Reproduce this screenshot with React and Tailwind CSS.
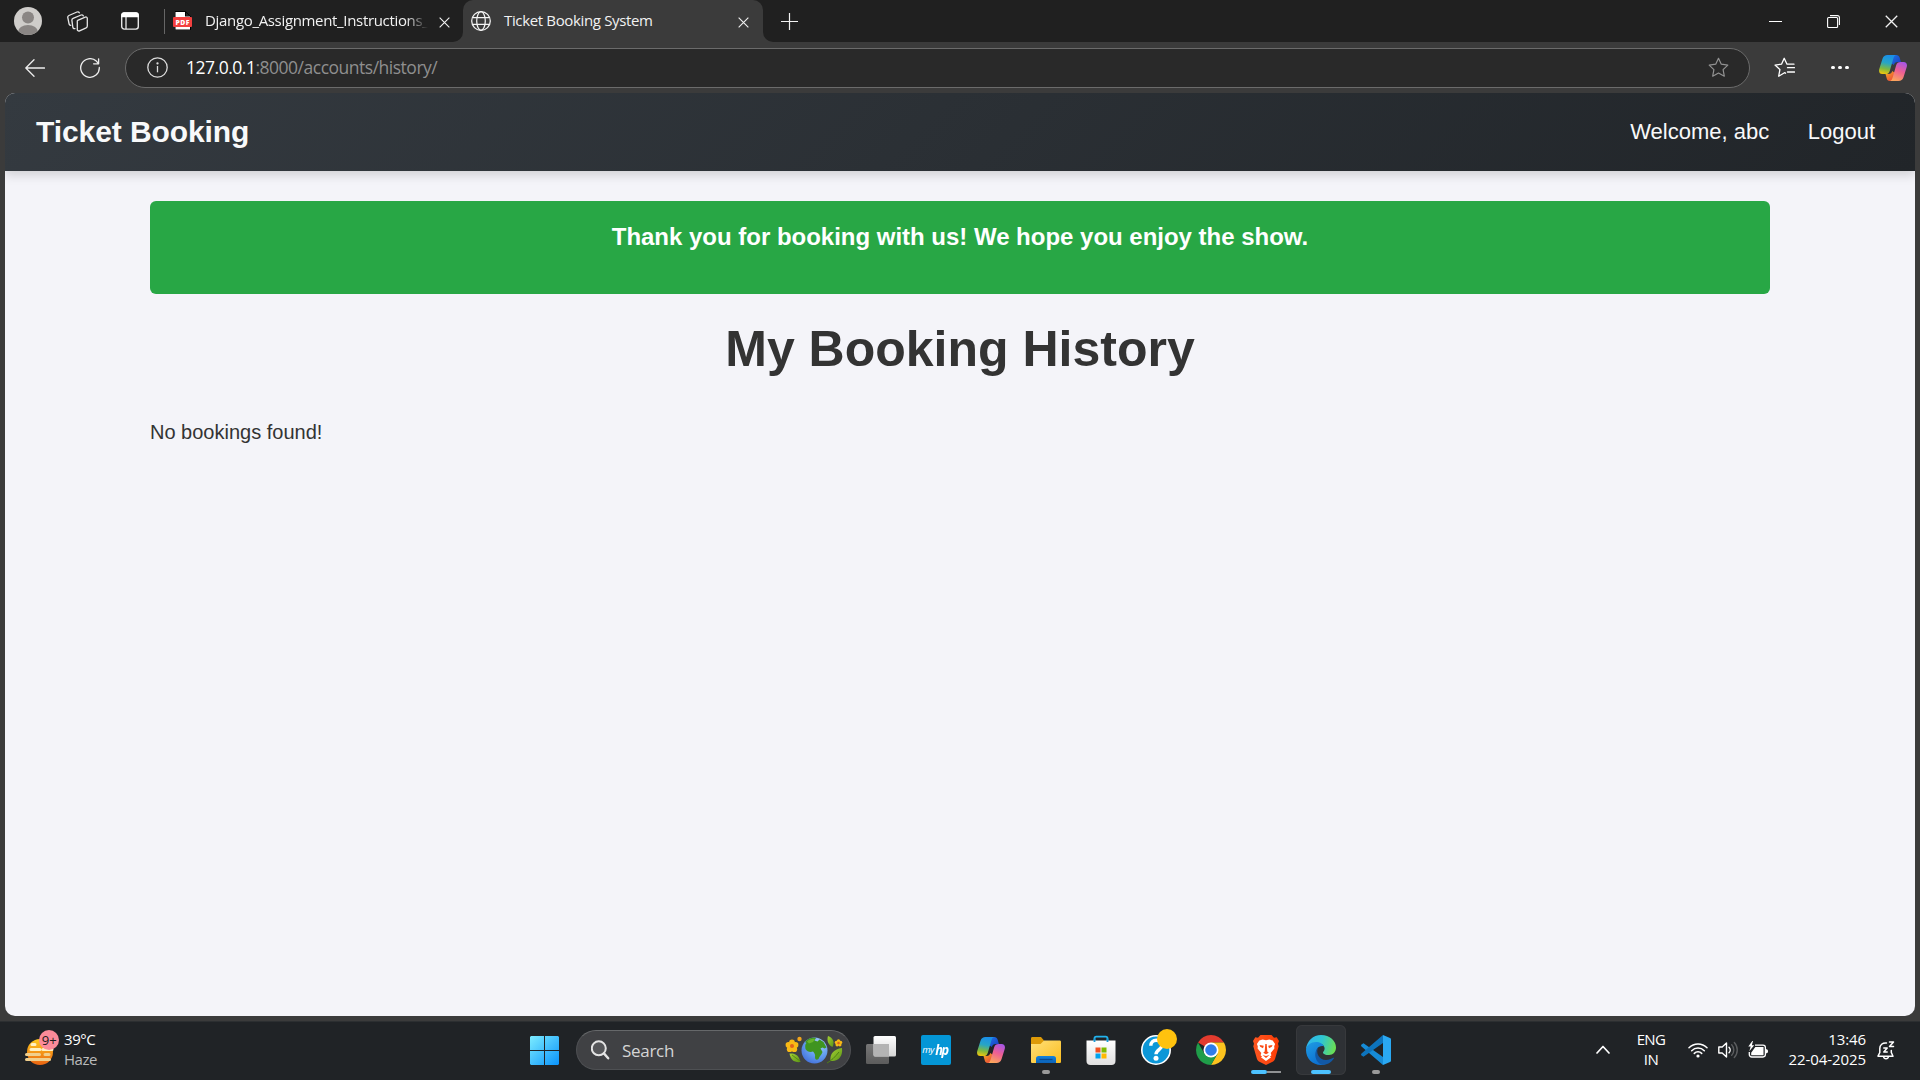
import React from "react";

const CopilotIcon = ({ id, className }) => (
  <svg className={className} viewBox="0 0 28 26" fill="none">
    <defs>
      <linearGradient id={id + "a"} x1="8" y1="0" x2="4" y2="19" gradientUnits="userSpaceOnUse">
        <stop stopColor="#1a8fe8" />
        <stop offset=".4" stopColor="#27a5c6" />
        <stop offset=".72" stopColor="#7fb93f" />
        <stop offset="1" stopColor="#f4c70c" />
      </linearGradient>
      <linearGradient id={id + "b"} x1="25" y1="7" x2="17" y2="26" gradientUnits="userSpaceOnUse">
        <stop stopColor="#a355ea" />
        <stop offset=".5" stopColor="#ee5f93" />
        <stop offset="1" stopColor="#fba55c" />
      </linearGradient>
      <linearGradient id={id + "c"} x1="14" y1="0" x2="21" y2="8" gradientUnits="userSpaceOnUse">
        <stop stopColor="#1e6fe0" />
        <stop offset="1" stopColor="#1a44c8" />
      </linearGradient>
      <linearGradient id={id + "d"} x1="7" y1="17" x2="14" y2="26" gradientUnits="userSpaceOnUse">
        <stop stopColor="#f6a723" />
        <stop offset="1" stopColor="#e8443a" />
      </linearGradient>
    </defs>
    <path d="M13 0h4.2c1.900 0 2.800.9 3.400 2.600l1.300 4.300h-3.400c-2 0-3 1-3.700 3L12 8z" fill={`url(#${id}c)`} />
    <path d="M15 26h-4.200c-1.900 0-2.600-1-3.100-2.700L6.500 19h3.200c2 0 3-1 3.600-3l2.600 2z" fill={`url(#${id}d)`} />
    <path d="M8.500 0h8.300c-1.500.7-2 2-2.600 4l-3.300 11.400C10 18.300 8.800 19 6.300 19H3.400C.7 19-.4 17 .2 14.300L3.500 3.800C4.400 1.200 6 0 8.500 0z" fill={`url(#${id}a)`} />
    <path d="M19.500 26h-8.300c1.500-.7 2-2 2.600-4l3.300-11.400C18 7.700 19.200 7 21.700 7h2.900c2.700 0 3.800 2 3.200 4.700l-3.300 10.500c-.9 2.600-2.500 3.800-5 3.800z" fill={`url(#${id}b)`} />
  </svg>
);

const Cross = ({ className }) => (
  <svg className={className} viewBox="0 0 12 12" stroke="currentColor" strokeWidth="1.2" fill="none">
    <path d="M.7.7l10.600 10.600M11.300.7L.7 11.300" />
  </svg>
);

function TabStrip() {
  return (
    <div className="flex h-[42px] items-center bg-[#202020] text-[#f2f2f2]">
      <svg className="ml-[14px] size-7 shrink-0" viewBox="0 0 28 28">
        <defs><clipPath id="av"><circle cx="14" cy="14" r="14" /></clipPath></defs>
        <circle cx="14" cy="14" r="14" fill="#cfcdca" />
        <g clipPath="url(#av)" fill="#8a8684">
          <circle cx="14" cy="10.500" r="6" />
          <ellipse cx="14" cy="25" rx="10" ry="7" />
        </g>
      </svg>
      <svg className="ml-[25px] size-[21px] shrink-0" viewBox="0 0 21 21" fill="none" stroke="#e6e6e6" strokeWidth="1.300" strokeLinejoin="round" strokeLinecap="round">
        <path d="M10.700 9.300l7.600-3.200c1.100-.4 2 .2 2 1.300v7.500c0 .9-.4 1.500-1.200 1.900l-6.500 3c-1.200.5-2.300-.1-2.300-1.400v-7.500c0-.8-.3-1.200.4-1.600z" />
        <path d="M8 17.600c-1.300.3-2-.4-2.200-1.500L4.900 9.300c-.1-1 .3-1.600 1.200-2l8-3.300c1.100-.4 1.900-.1 2.300.9" />
        <path d="M3.800 14.300c-.9.100-1.500-.4-1.700-1.300L.8 6.600c-.2-1 .2-1.700 1.100-2.100L10 1c1.100-.4 1.900-.1 2.300.8" />
      </svg>
      <svg className="ml-[33px] size-[18px] shrink-0" viewBox="0 0 18 18" fill="none">
        <rect x=".7" y=".9" width="16.600" height="16.200" rx="2.500" stroke="#e6e6e6" strokeWidth="1.400" />
        <path d="M.2 5.200V3C.2 1.400 1.400.2 3 .2h12c1.600 0 2.800 1.200 2.800 2.800v2.200z" fill="#fff" />
        <path d="M5 5v12" stroke="#e6e6e6" strokeWidth="1.300" />
      </svg>
      <div className="ml-[25px] h-[25px] w-px shrink-0 bg-[#666]" />
      <svg className="ml-2 h-5 w-[19px] shrink-0" viewBox="0 0 19 20">
        <path d="M2 0h10.500L18 5.500V19H2z" fill="#000" />
        <path d="M2.500 1H12v4.500h5V18.500H2.500z" fill="#fff" />
        <path d="M13 1.400l3.500 3.600H13z" fill="#222" />
        <rect y="6" width="19" height="10" rx="1" fill="#f4403f" />
        <text x="2.500" y="13.500" fontSize="6.800" fontWeight="800" fill="#fff" fontFamily="Open Sans, sans-serif" textLength="14">PDF</text>
      </svg>
      <div className="ml-[13px] w-[223px] shrink-0 whitespace-nowrap pb-[2px] text-[15px] leading-5 tracking-[-0.330px] [mask-image:linear-gradient(90deg,#000_90%,transparent_100%)]">
        Django_Assignment_Instructions_
      </div>
      <Cross className="ml-[11px] mt-[2px] size-[11px] shrink-0" />
      <div className="ml-[3px] size-[10px] shrink-0 self-end bg-[#3b3b3b]"><div className="size-full rounded-br-[10px] bg-[#202020]" /></div>
      <div className="flex h-full w-[300px] shrink-0 items-center rounded-t-[10px] bg-[#3b3b3b]">
        <svg className="ml-2 size-5 shrink-0" viewBox="0 0 20 20" fill="none" stroke="#f4f4f4" strokeWidth="1.250">
          <circle cx="10" cy="10" r="9.300" />
          <ellipse cx="10" cy="10" rx="4.300" ry="9.300" />
          <path d="M1.500 6.700h17M1.500 13.300h17" />
        </svg>
        <div className="ml-[13px] w-[150px] whitespace-nowrap pb-[2px] text-[15px] leading-5 tracking-[-0.350px]">Ticket Booking System</div>
        <Cross className="ml-[84px] mt-[2px] size-[11px] shrink-0" />
      </div>
      <div className="size-[10px] shrink-0 self-end bg-[#3b3b3b]"><div className="size-full rounded-bl-[10px] bg-[#202020]" /></div>
      <svg className="ml-[8px] size-[17px] shrink-0" viewBox="0 0 17 17" stroke="#f2f2f2" strokeWidth="1.200"><path d="M8.500 0v17M0 8.500h17" /></svg>
      <div className="ml-auto mr-[22px] flex items-center gap-[45px]">
        <div className="h-px w-[13px] bg-white" />
        <svg className="mt-px size-[13px]" viewBox="0 0 13 13" fill="none" stroke="#fff" strokeWidth="1.100">
          <rect x=".6" y="2.500" width="10" height="10" rx="1" />
          <path d="M3 .6h7.400c1.200 0 2 .8 2 2V10" />
        </svg>
        <Cross className="mt-px size-[13px]" />
      </div>
    </div>
  );
}

function Toolbar() {
  return (
    <div className="flex h-[51px] items-center bg-[#3b3b3b] text-[#ededed]">
      <svg className="ml-[25px] h-[18px] w-5 shrink-0" viewBox="0 0 20 18" fill="none" stroke="currentColor" strokeWidth="1.300" strokeLinecap="round" strokeLinejoin="round">
        <path d="M19.500 9H.8M9 .8L.8 9 9 17.200" />
      </svg>
      <svg className="ml-[35px] size-[20px] shrink-0" viewBox="0 0 20 20" fill="none" stroke="currentColor" strokeWidth="1.300" strokeLinecap="round" strokeLinejoin="round">
        <path d="M19.300 9.500a9.300 9.300 0 1 1-3-6.400L18.500 5.500M18.600.8v5h-5" />
      </svg>
      <div className="ml-[25px] flex h-10 w-[1625px] shrink-0 items-center rounded-full border border-[#6b6b6b] bg-[#292929]">
        <svg className="ml-[21px] size-[21px] shrink-0" viewBox="0 0 21 21" fill="none" stroke="#dcdcdc" strokeWidth="1.300">
          <circle cx="10.500" cy="10.500" r="9.700" />
          <path d="M10.500 9v6.300" /><circle cx="10.500" cy="6.400" r=".5" fill="#dcdcdc" />
        </svg>
        <div className="ml-[18px] whitespace-nowrap text-[17.500px] tracking-[-0.490px] text-[#8f8f8f]">
          <span className="text-white">127.0.0.1</span>:8000/accounts/history/
        </div>
        <svg className="ml-auto mr-5 size-[21px]" viewBox="0 0 21 21" fill="none" stroke="#929292" strokeWidth="1.200" strokeLinejoin="round">
          <path d="M10.500 1.300l2.800 5.900 6.500.9-4.700 4.500 1.200 6.600-5.800-3.200-5.800 3.200 1.200-6.600L1.200 8.100l6.500-.9z" />
        </svg>
      </div>
      <svg className="ml-[24px] size-[21px] shrink-0" viewBox="0 0 21 21" fill="none" stroke="#fff" strokeWidth="1.300" strokeLinejoin="round" strokeLinecap="round">
        <path d="M11.500 16.200l-1-.5-5.800 3.500 1.200-6.600L1 8.100l6.500-.9 2.700-5.900 2.800 5.900h7M13.500 10.700h7M13.500 15h7" />
      </svg>
      <div className="ml-[36px] flex gap-[3.500px]">
        <div className="size-[3.500px] rounded-full bg-white" />
        <div className="size-[3.500px] rounded-full bg-white" />
        <div className="size-[3.500px] rounded-full bg-white" />
      </div>
      <CopilotIcon id="tb" className="ml-[30px] h-[26px] w-7 shrink-0" />
    </div>
  );
}

function Page() {
  return (
    <div className="bg-[#3b3b3b] px-[5px] pb-[5px]">
      <div className="h-[923px] overflow-hidden rounded-[10px] bg-[#f4f4f9] font-['Liberation_Sans',Arial,sans-serif] text-[#333]">
        <header className="relative flex h-[78px] items-center justify-between bg-[linear-gradient(135deg,#343a40,#212529)] pl-[31px] pr-10 text-[#f8f9fa] shadow-[0_4px_10px_rgba(0,0,0,0.15)]">
          <div className="text-[30px] font-bold leading-none tracking-[-0.080px]">Ticket Booking</div>
          <nav className="flex gap-[38.500px] text-[22px] leading-none">
            <span>Welcome, abc</span>
            <span>Logout</span>
          </nav>
        </header>
        <main className="mx-[145px] pt-[30px]">
          <div className="h-[93px] rounded-[6px] bg-[#28a745] pt-[22px] text-center text-2xl font-bold leading-7 tracking-[-0.015px] text-white">
            Thank you for booking with us! We hope you enjoy the show.
          </div>
          <h1 className="mt-[26px] text-center text-[50px] font-bold leading-[58px]">My Booking History</h1>
          <p className="mt-[42px] text-xl leading-6">No bookings found!</p>
        </main>
      </div>
    </div>
  );
}

const AppSlot = ({ children, active, indicator }) => (
  <div className="flex w-[55px] justify-center">
    <div className={"flex h-[50px] w-[50px] flex-col items-center rounded-md " + (active ? "bg-[#2e3135] inset-ring-1 inset-ring-[#37393c]" : "")}>
      <div className="mt-[10px] flex size-[30px] items-center justify-center">{children}</div>
      <div className="mt-[5px] flex h-1 justify-center">{indicator}</div>
    </div>
  </div>
);

const Dot = () => <div className="h-1 w-2 rounded-full bg-[#9a9a9a]" />;

const Flower = ({ x, y, s }) => (
  <g transform={`translate(${x} ${y}) scale(${s})`}>
    <g fill="#f9b916">
      <circle cx="0" cy="-3.500" r="2.700" /><circle cx="3.400" cy="-1" r="2.700" /><circle cx="2.200" cy="3" r="2.700" />
      <circle cx="-2.200" cy="3" r="2.700" /><circle cx="-3.400" cy="-1" r="2.700" />
    </g>
    <circle r="1.900" fill="#e2621b" />
  </g>
);

function SearchBox() {
  return (
    <div className="ml-[17px] flex h-10 w-[275px] items-center rounded-full border border-[#4e5053] border-t-[#66686a] bg-[#404144]">
      <svg className="ml-[14px] size-5" viewBox="0 0 20 20" fill="none" stroke="#e4e4e4" strokeWidth="2" strokeLinecap="round">
        <circle cx="7.800" cy="8.300" r="7" fill="#56575a" /><path d="M12.900 13.400l4.300 4.900" strokeWidth="2.400" />
      </svg>
      <div className="ml-[11px] pt-px text-[17px] tracking-[-0.300px] text-[#d5d5d5]">Search</div>
      <svg className="ml-auto mr-[7px] h-[30px] w-[58px]" viewBox="0 0 58 30">
        <defs>
          <radialGradient id="earth" cx=".65" cy=".25" r=".9"><stop stopColor="#a9d3fb" /><stop offset=".5" stopColor="#659ff0" /><stop offset="1" stopColor="#3d68d8" /></radialGradient>
          <linearGradient id="leaf" x1="0" y1="0" x2="1" y2="1"><stop stopColor="#a5d232" /><stop offset="1" stopColor="#5b9417" /></linearGradient>
        </defs>
        <path d="M4.500 18.500c6-.5 9.500 2 11 8.500-6 .8-10-2-11-8.500z" fill="url(#leaf)" />
        <path d="M43 1c5 2 7 6 4.500 11-4-2-6-6-4.500-11z" fill="url(#leaf)" />
        <path d="M57 13c1 8-3.500 14-11.500 13-1-7 3.500-12 11.500-13z" fill="url(#leaf)" />
        <path d="M42 28c4-2 8-6 12-11" stroke="#4d7f15" strokeWidth="1" fill="none" />
        <path d="M7 20l8 6" stroke="#4d7f15" strokeWidth=".8" />
        <circle cx="29.500" cy="15.500" r="13" fill="url(#earth)" />
        <path d="M20 7c3-4 7-5 11-4l-1.500 2.500 3 1 2-2 4 2.500 3 5.500-2 1-2-1-2 1 2 3.500c-1 3-3 4-4 7-2 1.500-3.500.5-3.500-2 .5-2-.5-4-2-5.500-3 1-6 0-7.500-2.500C20 11.500 20 9 21.500 8z" fill="#3f9420" />
        <path d="M22 6.500c2-2 5-3 8-2.500l-2 3-4 1.500z" fill="#67b52b" />
        <Flower x={7} y={11} s={1.05} />
        <circle cx="14.500" cy="4" r="2.200" fill="#f2a51b" />
        <Flower x={53.500} y={8} s={0.62} />
      </svg>
    </div>
  );
}

function Taskbar() {
  return (
    <div className="flex h-[59px] items-center border-t border-[#2c2f31] bg-[#202326] pb-[2px] text-white">
      <div className="flex w-[530px] items-center">
        <svg className="ml-[24px] mb-[5px] h-[36px] w-[36px]" viewBox="0 0 36 36">
          <defs><linearGradient id="haze" x1="0" y1="0" x2="0" y2="1"><stop stopColor="#ffc91c" /><stop offset="1" stopColor="#ea6412" /></linearGradient></defs>
          <circle cx="16" cy="22" r="13" fill="url(#haze)" />
          <g stroke="#ffe7a8" strokeWidth="3" strokeLinecap="round">
            <path d="M8 14.500h3M7 19.500h9M19 19.500h9" stroke="#fff0c2" />
            <path d="M2.500 24.500h13M21 24.500h4M2.500 29.500h23" stroke="#f0cf8d" />
          </g>
          <circle cx="25" cy="10" r="10" fill="#fb8b99" />
          <text x="17.800" y="15" fontSize="13.500" textLength="15" lengthAdjust="spacingAndGlyphs" fill="#1b1b1b" fontFamily="Open Sans, sans-serif">9+</text>
        </svg>
        <div className="ml-[4px] pb-[2px] text-[15px] leading-5 tracking-[-0.450px]">
          <div>39°C</div>
          <div className="text-[#b9babb]">Haze</div>
        </div>
      </div>
      <svg className="size-[29px]" viewBox="0 0 29 29">
        <defs><linearGradient id="win" x1="0" y1="0" x2="1" y2="1"><stop stopColor="#7cecff" /><stop offset="1" stopColor="#0a93fb" /></linearGradient></defs>
        <path d="M1 0h13v14H0V1zM15 0h13l1 1v13H15zM0 15h14v14H1l-1-1zM15 15h14v13l-1 1H15z" fill="url(#win)" />
      </svg>
      <SearchBox />
      <div className="ml-[2px] flex">
        <AppSlot>
          <svg className="size-[30px]" viewBox="0 0 30 30">
            <defs><linearGradient id="tv" x1="0" y1="0" x2="0" y2="1"><stop stopColor="#fff" /><stop offset="1" stopColor="#d6d6d6" /></linearGradient>
            <linearGradient id="tw" x1="0" y1="0" x2="0" y2="1"><stop stopColor="#777" /><stop offset="1" stopColor="#5c5c5c" /></linearGradient></defs>
            <rect y="9" width="23" height="20" rx="1.500" fill="url(#tw)" />
            <rect x="7.500" y="1" width="22.500" height="20.500" rx="1.500" fill="url(#tv)" />
            <path d="M7.500 9H23v12.500H9L7.500 20z" fill="#b4b4b4" />
          </svg>
        </AppSlot>
        <AppSlot>
          <div className="flex size-[30px] items-center justify-center rounded-[2px] bg-[#0496d6] italic">
            <span className="text-[9.500px] font-medium leading-none tracking-[-0.600px]">my</span>
            <span className="-mt-px scale-x-85 text-[15px] font-bold leading-none tracking-[-1.500px]">hp</span>
          </div>
        </AppSlot>
        <AppSlot><CopilotIcon id="tk" className="h-[26px] w-7" /></AppSlot>
        <AppSlot indicator={<Dot />}>
          <svg className="size-[30px]" viewBox="0 0 30 30">
            <defs><linearGradient id="fo" x1="0" y1="0" x2="1" y2="1"><stop stopColor="#ffe07a" /><stop offset="1" stopColor="#fbbd1e" /></linearGradient>
            <linearGradient id="fb" x1="0" y1="0" x2="0" y2="1"><stop stopColor="#1482dc" /><stop offset="1" stopColor="#0b62b8" /></linearGradient></defs>
            <path d="M0 3.500C0 2.500.6 2 1.500 2H10l3 3.500V14H0z" fill="#dd9a08" />
            <path d="M0 9h9.500L13 5.500h15.500c1 0 1.500.5 1.500 1.500v19.500c0 1-.5 1.500-1.500 1.500h-27C.5 28 0 27.500 0 26.500z" fill="url(#fo)" />
            <path d="M5 28v-4.500C5 22 6 21 7.500 21h15c1.500 0 2.500 1 2.500 2.500V28z" fill="url(#fb)" />
            <path d="M8.500 24.500h13" stroke="#0a4a91" strokeWidth="1.300" />
          </svg>
        </AppSlot>
        <AppSlot>
          <svg className="size-[30px]" viewBox="0 0 30 30">
            <defs><linearGradient id="st" x1="0" y1="0" x2="0" y2="1"><stop stopColor="#fff" /><stop offset="1" stopColor="#e0e0e0" /></linearGradient></defs>
            <path d="M8.500 7V3.500c0-1.200.6-1.800 1.800-1.800h9.400c1.200 0 1.800.6 1.800 1.800V7" stroke="#22b4ee" strokeWidth="1.800" fill="none" />
            <path d="M.5 5.500h29V26c0 2.500-1.500 4-4 4h-21c-2.500 0-4-1.500-4-4z" fill="url(#st)" />
            <path d="M8.500 3.500V7M21.500 3.500V7" stroke="#1a9ad6" strokeWidth="1.800" />
            <rect x="9.500" y="12.500" width="5" height="5" fill="#f15022" /><rect x="15.500" y="12.500" width="5" height="5" fill="#7fba00" />
            <rect x="9.500" y="18.500" width="5" height="5" fill="#00a4ef" /><rect x="15.500" y="18.500" width="5" height="5" fill="#ffb900" />
          </svg>
        </AppSlot>
        <AppSlot>
          <svg className="size-[30px] overflow-visible" viewBox="0 0 30 30">
            <circle cx="15" cy="15" r="14.200" fill="#0c97d8" stroke="#fff" strokeWidth="1.600" />
            <path d="M9.800 10.800c0-3.600 2.300-5.500 5.500-5.500 3.300 0 5.600 1.900 5.600 4.900 0 4.300-5.900 4.400-5.900 9" stroke="#fff" strokeWidth="3.400" fill="none" />
            <circle cx="15" cy="23.300" r="2.500" fill="#fff" />
            <circle cx="26" cy="4" r="10" fill="#ffc20e" />
          </svg>
        </AppSlot>
        <AppSlot>
          <svg className="size-[30px]" viewBox="0 0 48 48">
            <path d="M24 24L3.220 12A24 24 0 0 1 44.780 12H24z" fill="#e33b2e" />
            <path d="M44.780 12A24 24 0 0 1 24 48l10.390-18L24 12z" fill="#fcc31e" />
            <path d="M3.220 12A24 24 0 0 0 24 48l10.390-18H13.610z" fill="#1f9d49" />
            <circle cx="24" cy="24" r="12" fill="#fff" /><circle cx="24" cy="24" r="9.300" fill="#2f7de9" />
          </svg>
        </AppSlot>
        <AppSlot indicator={<div className="flex w-[30px] items-center"><div className="h-1 w-4 rounded-full bg-[#4cc2ff]" /><div className="h-[2px] w-[14px] bg-[#909294]" /></div>}>
          <svg className="h-[30px] w-[26px]" viewBox="0 0 26 30">
            <defs><linearGradient id="br" x1="0" y1="0" x2="1" y2="0"><stop stopColor="#ff5722" /><stop offset="1" stopColor="#fb3c05" /></linearGradient></defs>
            <path d="M7.500 0h11l2.500 2.700 2.700-.4L26 6l-1 2.800.7 2.500-3.600 12.500c-.5 1.500-1.300 2.200-2.500 3L13 30l-6.600-3.200c-1.200-.8-2-1.500-2.500-3L.3 11.300 1 8.800 0 6l2.300-3.700 2.700.4z" fill="url(#br)" />
            <path d="M13 5.200l3.300-.7 3.400 1 2.400 3.500-.9 2.300.2 2.200-3.700 4.500.7 2.200-1.500 1.600 1.200.4L13 26l-5.100-3.800 1.200-.4-1.500-1.600.7-2.200-3.700-4.500.2-2.200L3.900 9l2.400-3.500 3.400-1z" fill="#fff" />
            <path d="M6.500 10l4.300.8-.8 2.400-2.800-1.400zM19.500 10l-4.300.8.8 2.400 2.800-1.400zM12.300 9h1.400l.6 7.500 1.500 1.300L13 19.300l-2.800-1.500 1.500-1.300zM9.500 19.900l3.500 1 3.500-1-3.500 3z" fill="#fb4a14" />
          </svg>
        </AppSlot>
        <AppSlot active indicator={<div className="h-1 w-5 rounded-full bg-[#4cc2ff]" />}>
          <svg className="size-[30px]" viewBox="0 0 30 30">
            <defs>
              <linearGradient id="e1" x1="0" y1=".3" x2="1" y2=".5"><stop stopColor="#2fb5ee" /><stop offset=".5" stopColor="#2fc6d2" /><stop offset="1" stopColor="#6bdf52" /></linearGradient>
              <linearGradient id="e2" x1="0" y1="0" x2=".6" y2="1"><stop stopColor="#1f9de4" /><stop offset="1" stopColor="#0c6ed0" /></linearGradient>
            </defs>
            <path d="M0 14C1 6 7 0 15 0c9 0 15 6 15 12.500 0 4.500-3 7.500-7 7.500-3.500 0-6-1.200-6-2.600 0-.9 1.600-1.400 1.600-4C18.600 10.400 15 8 11 8 5.500 8 1.500 11 0 14z" fill="url(#e1)" />
            <path d="M0 15c0-4.500 5-8 10-8 4 0 7 2 8 4.500-1.500-1-5.500-.5-7 2.500-3 6 1 15.500 9 15-1.500.7-3.200 1-5 1C6.500 30 0 23.500 0 15z" fill="url(#e2)" />
            <path d="M12.500 12.500C9 17 13 25 20 25c3 0 5-1 7.300-2.200.5-.2.900.2.600.7C25 28 20.500 30 17 29.700 9.500 29 6.500 17 12.500 12.500z" fill="#1258a5" />
          </svg>
        </AppSlot>
        <AppSlot indicator={<Dot />}>
          <svg className="size-[30px]" viewBox="0 0 30 30">
            <path d="M2.500 8.200L.5 9.600c-.6.500-.6 1.300 0 1.800L22 30V22z" fill="#168bd6" />
            <path d="M2.500 21.800L.5 20.400c-.6-.5-.6-1.300 0-1.800L22 0v8z" fill="#0d74bd" />
            <path d="M22 0l7 3c.7.300 1 .8 1 1.500v21c0 .7-.3 1.200-1 1.500l-7 3z" fill="#2aa8f2" />
          </svg>
        </AppSlot>
      </div>
      <div className="ml-auto flex items-center text-[15px] leading-5">
        <svg className="mb-px h-[9px] w-[14px]" viewBox="0 0 14 9" fill="none" stroke="#fff" strokeWidth="1.700" strokeLinecap="round" strokeLinejoin="round"><path d="M1 8l6-6.500L13 8" /></svg>
        <div className="ml-[21px] w-[40px] pb-[2px] text-center tracking-[-0.600px]"><div>ENG</div><div>IN</div></div>
        <svg className="ml-[17px] mb-px h-4 w-5" viewBox="0 0 20 16" fill="none" stroke="#fff" strokeWidth="1.500" strokeLinecap="round">
          <path d="M1 5.800a12.700 12.700 0 0 1 18 0M3.700 8.700a8.900 8.900 0 0 1 12.600 0M6.300 11.400a5.200 5.200 0 0 1 7.400 0" />
          <circle cx="10" cy="14" r="1.600" fill="#fff" stroke="none" />
        </svg>
        <svg className="ml-[10px] h-[18px] w-5" viewBox="0 0 20 18" fill="none" stroke="#fff" strokeWidth="1.400" strokeLinejoin="round" strokeLinecap="round">
          <path d="M.8 6h3.400L8.500 2v14l-4.300-4H.8z" /><path d="M11 6.200a4 4 0 0 1 0 5.600" />
          <path d="M13.700 3.800a7.500 7.500 0 0 1 0 10.400M16.300 1.500a11 11 0 0 1 0 15" stroke="#5b5d5f" />
        </svg>
        <svg className="ml-[10px] mb-px h-[18px] w-5" viewBox="0 0 20 18" fill="none">
          <path d="M7 4.200h8c1.400 0 2.400 1 2.400 2.400v7c0 1.400-1 2.400-2.400 2.400H3.700c-1.400 0-2.400-1-2.400-2.400V11" stroke="#fff" strokeWidth="1.300" />
          <path d="M7.300 6.100h8.200v8.100H3.200v-2.500z" fill="#fff" />
          <path d="M18 8.200c1.300 0 2 .6 2 2s-.7 2-2 2z" fill="#fff" />
          <path d="M4.300 0L.3 5.600h2.400L1.300 10.200l4.900-5.900H3.900L5 0z" fill="#fff" />
        </svg>
        <div className="ml-[17px] w-[81px] whitespace-nowrap pb-[2px] text-right tracking-[-0.080px]"><div>13:46</div><div>22-04-2025</div></div>
        <svg className="ml-[11px] mr-[25px] h-[19px] w-[18px]" viewBox="0 0 18 19" fill="none" stroke="#fff" strokeWidth="1.500" strokeLinecap="round" strokeLinejoin="round">
          <path d="M9.500 2C5.500 1.500 2.800 4 2.800 7.500v4L1 15.200h15l-1.700-3.700V9.500M6.500 15.500c.5 3 4.500 3 5 0" />
          <path d="M12.500 1h4l-4 4.500h4M6.800 7h3.400l-3.400 4h3.400" />
        </svg>
      </div>
    </div>
  );
}

export default function App() {
  return (
    <div className="h-[1080px] w-[1920px] overflow-hidden bg-[#3b3b3b] font-['Open_Sans','Noto_Sans',sans-serif]">
      <TabStrip />
      <Toolbar />
      <Page />
      <Taskbar />
    </div>
  );
}
